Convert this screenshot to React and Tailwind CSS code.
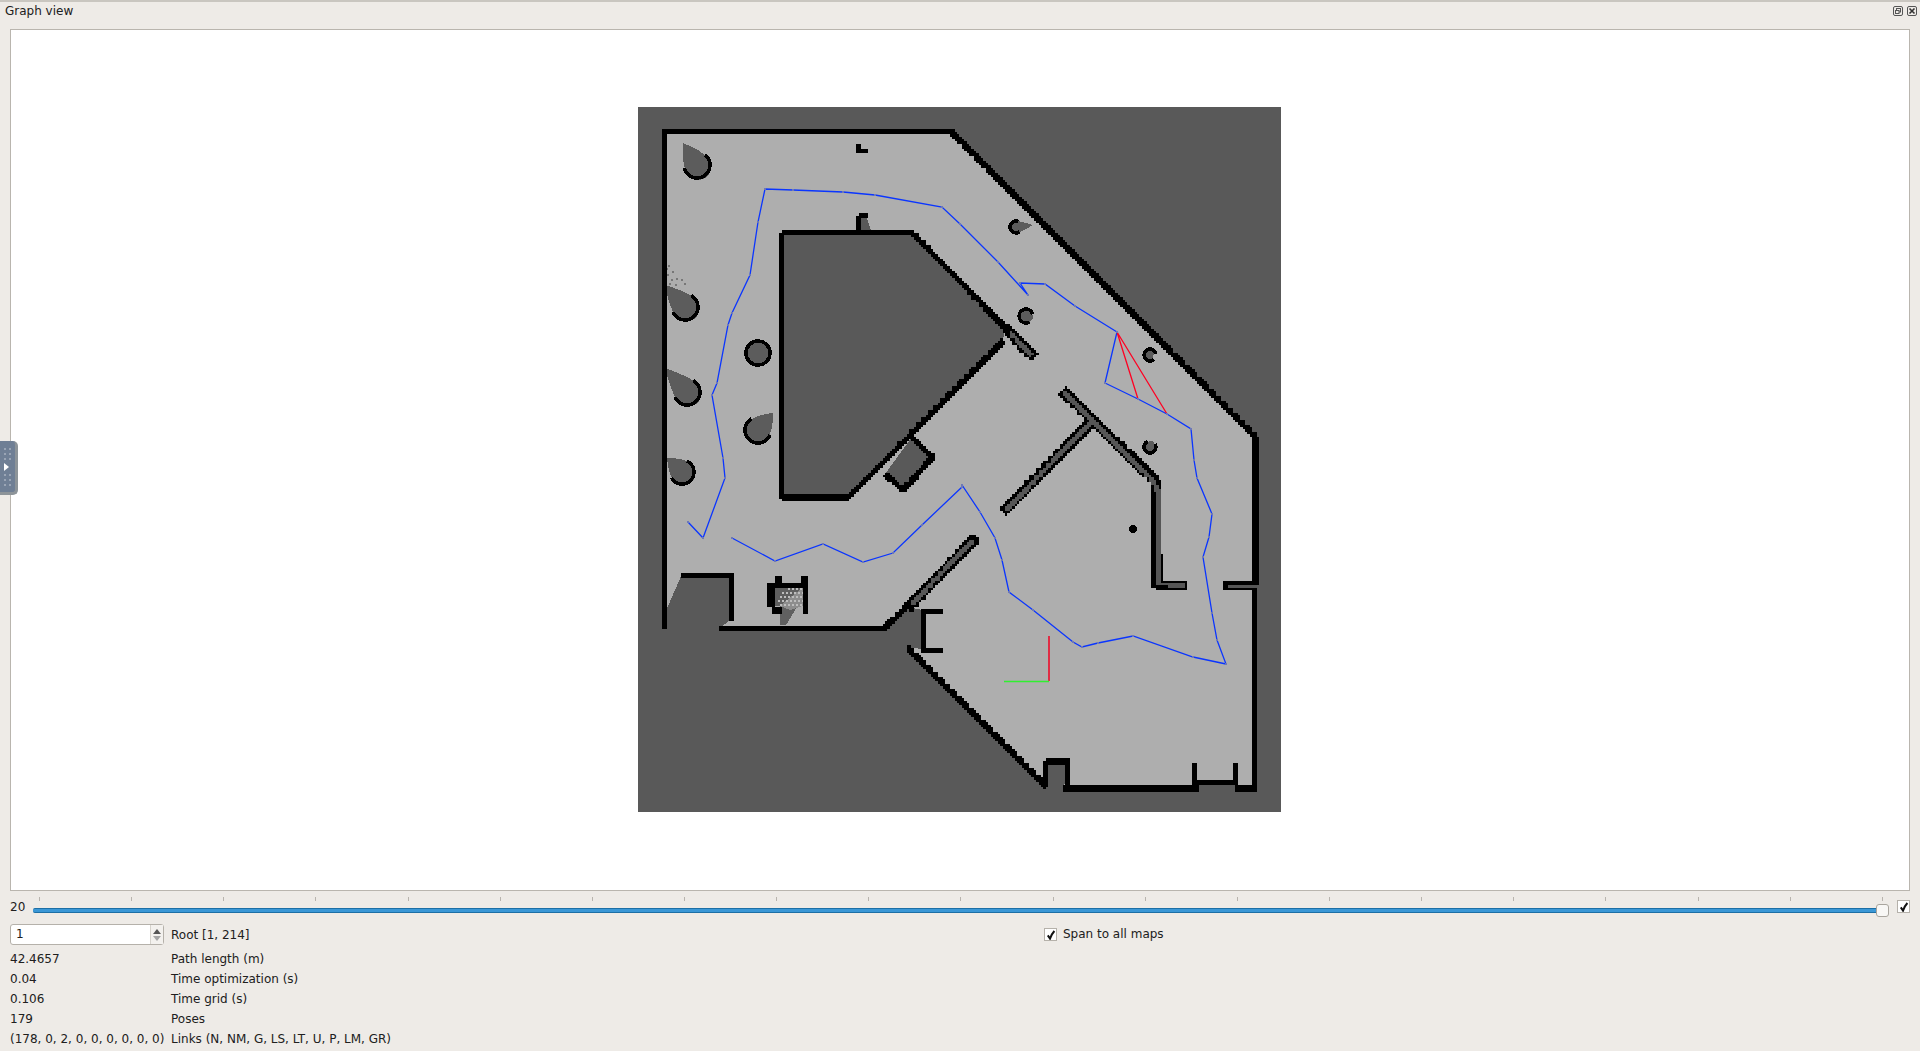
const CELL = 2.4;

// occupancy grid look: walls are stamped as square cells on a coarse grid
const cellsPath = (segments) => {
  const seen = new Set();
  segments.forEach(([pts, w]) => {
    for (let i = 0; i < pts.length - 1; i++) {
      const [x1, y1] = pts[i];
      const [x2, y2] = pts[i + 1];
      const len = Math.hypot(x2 - x1, y2 - y1);
      const nx = -(y2 - y1) / len;
      const ny = (x2 - x1) / len;
      for (let d = 0; d <= len; d += 1) {
        for (let o = -w / 2; o <= w / 2; o += 1) {
          const x = x1 + ((x2 - x1) * d) / len + nx * o;
          const y = y1 + ((y2 - y1) * d) / len + ny * o;
          seen.add(`${Math.round(x / CELL)},${Math.round(y / CELL)}`);
        }
      }
    }
  });
  return [...seen]
    .map((k) => {
      const [a, b] = k.split(",").map(Number);
      return `M${(a * CELL - CELL / 2 + 0.5).toFixed(1)} ${(b * CELL - CELL / 2 + 1).toFixed(1)}h${CELL}v${CELL}h-${CELL}z`;
    })
    .join("");
};

const blackWalls = [
  [[[663, 131], [951, 131], [1255, 436], [1255, 583]], 3],
  [[[1254, 583], [1254, 787], [1236, 787]], 4],
  [[[663, 131], [663, 626]], 3],
  [[[720, 628], [883, 628], [970, 543]], 3],
  [[[1197, 787], [1062, 787]], 3],
  [[[1045, 785], [907, 647]], 3],
  [[[782, 232], [912, 232], [1005, 327]], 3],
  [[[782, 232], [782, 497], [847, 497], [1003, 340]], 3],
  [[[1005, 327], [1033, 356]], 8],
  [[[1062, 390], [1155, 480], [1157, 585], [1185, 585]], 8],
  [[[1092, 420], [1003, 510]], 8],
  [[[1225, 585], [1256, 585]], 7],
  [[[975, 537], [907, 607]], 8],
  [[[682, 574], [730, 574], [730, 618]], 3],
  [[[1193, 763], [1193, 781], [1235, 781], [1235, 763]], 2],
  [[[940, 610], [922, 610], [922, 649], [940, 649]], 2],
  [[[1045, 785], [1046, 761], [1067, 761], [1067, 783]], 3],
  [[[912, 437], [932, 456], [903, 489], [885, 474]], 3],
  [[[857, 143], [857, 150], [866, 150]], 2],
  [[[858, 215], [858, 227]], 3],
  [[[858, 215], [866, 215]], 1],
  [[[768, 584], [807, 584]], 3],
  [[[774, 579], [781, 579]], 4],
  [[[802, 579], [806, 579]], 4],
  [[[770, 584], [770, 605]], 4],
  [[[805, 584], [805, 605]], 3],
  [[[773, 609], [781, 609]], 4],
  [[[804, 610], [806, 610]], 6],
];

const darkWalls = [
  [[[1010, 332], [1031, 354]], 2],
  [[[1064, 392], [1153, 480], [1157, 490], [1157, 583], [1183, 584]], 2],
  [[[1090, 422], [1006, 508]], 2],
  [[[1228, 585], [1254, 585]], 1],
  [[[972, 540], [912, 602]], 2],
];

// [tipX, tipY, centerX, centerY, r, arc half angle]
const drops = [
  [683, 143, 697, 165, 13, 1.9],
  [665, 285, 685, 307, 13, 1.9],
  [665, 368, 687, 392, 13, 1.9],
  [758, 353, 758, 353, 12, 3.2],
  [773, 413, 758, 430, 13, 1.9],
  [667, 458, 682, 472, 12, 1.9],
  [1033, 225, 1016, 227, 6, 2.1],
  [1033, 319, 1026, 316, 7, 2.5],
  [1153, 356, 1150, 355, 6, 2.6],
  [1152, 441, 1150, 447, 6, 2.4],
];

const onCircle = (cx, cy, r, a) => `${(cx + Math.cos(a) * r).toFixed(1)} ${(cy + Math.sin(a) * r).toFixed(1)}`;

// teardrop: convex sides running from the tip onto the circle
const dropPath = ([tx, ty, cx, cy, r]) => {
  if (tx === cx && ty === cy) return `M${cx - r} ${cy}a${r} ${r} 0 1 0 ${2 * r} 0a${r} ${r} 0 1 0 ${-2 * r} 0z`;
  const a = Math.atan2(cy - ty, cx - tx);
  const back = 0.9;
  const c1 = onCircle(cx - Math.cos(a) * r * 0.7, cy - Math.sin(a) * r * 0.7, r * 0.95, a - Math.PI / 2);
  const c2 = onCircle(cx - Math.cos(a) * r * 0.7, cy - Math.sin(a) * r * 0.7, r * 0.95, a + Math.PI / 2);
  return `M${tx} ${ty}Q${c1} ${onCircle(cx, cy, r, a - back - 0.6)}A${r} ${r} 0 1 1 ${onCircle(cx, cy, r, a + back + 0.6)}Q${c2} ${tx} ${ty}Z`;
};

const arcPath = ([tx, ty, cx, cy, r, h]) => {
  if (tx === cx && ty === cy) return `M${cx - r} ${cy}a${r} ${r} 0 1 0 ${2 * r} 0a${r} ${r} 0 1 0 ${-2 * r} 0z`;
  const a = Math.atan2(cy - ty, cx - tx);
  return `M${onCircle(cx, cy, r, a - h)}A${r} ${r} 0 ${h > Math.PI / 2 ? 1 : 0} 1 ${onCircle(cx, cy, r, a + h)}`;
};

const scatter = [
  [668, 265], [672, 271], [667, 274], [676, 278], [671, 279], [681, 279], [684, 283], [669, 283], [675, 284], [666, 268],
];
const dither = [];
for (let y = 588; y < 608; y += 4) {
  for (let x = 778; x < 803; x += 4) {
    if (x + y * 0.6 > 1135) dither.push([x + (y % 8 ? 2 : 0), y]);
  }
}

const pathA = "688,522 703,538 725,478 723,458 712,395 717,383 728,325 732,313 750,275 758,222 765,189 793,190 843,192 875,195 942,207 960,224 998,262 1028,295 1020,283 1045,284 1075,306 1117,332 1105,383 1138,399 1167,414 1191,429 1194,460 1197,478 1212,514 1209,537 1203,557 1212,613 1217,640 1226,664 1193,657 1133,636 1098,643 1082,647 1073,642 1033,610 1009,592 1002,560 995,538 980,512 962,485";
const pathB = "962,487 922,525 893,553 863,562 823,544 775,561 732,538";
const poses = `${pathA} ${pathB}`.split(" ").map((p) => p.split(",").map(Number));

const OccupancyMap = () => (
  <svg width="643" height="705" viewBox="638 107 643 705" className="block shrink-0">
    <rect x="638" y="107" width="643" height="705" fill="#595959" />
    <polygon
      shapeRendering="crispEdges"
      fill="#aeaeae"
      points="665,133 951,133 1255,437 1255,785 1235,785 1235,781 1197,781 1197,785 1062,785 1068,783 1068,762 1045,762 1045,785 907,647 922,649 922,610 907,607 883,628 720,628 730,620 730,574 682,574 665,613"
    />
    <g shapeRendering="crispEdges">
      <polygon fill="#595959" points="782,232 912,232 1005,327 1003,340 847,497 782,497" />
      <polygon fill="#595959" points="912,437 932,456 903,489 885,474" />
      <polygon fill="#595959" points="860,218 866,216 871,230 861,230" />
      <rect x="773" y="587" width="30" height="19" fill="#5f5f5f" />
      <polygon fill="#606060" points="780,605 797,607 786,625 780,625" />
      <polygon fill="#8d8d8d" points="803,587 803,606 790,610 780,606" />
      {dither.map(([x, y], i) => (
        <rect key={i} x={x} y={y} width="2" height="2" fill="#bdbdbd" />
      ))}
      {scatter.map(([x, y], i) => (
        <rect key={i} x={x} y={y} width="2" height="2" fill="#777777" />
      ))}
      {drops.map((d, i) => (
        <path key={i} d={dropPath(d)} fill="#5c5c5c" />
      ))}
      {drops.map((d, i) => (
        <path key={i} d={arcPath(d)} fill="none" stroke="#000000" strokeWidth="3.5" />
      ))}
      <circle cx="1133" cy="529" r="4" fill="#000000" />
      <path d={cellsPath(blackWalls)} fill="#000000" />
      <path d={cellsPath(darkWalls)} fill="#565656" />
    </g>
    <g fill="none" strokeWidth="1.3">
      <polyline points={pathA} stroke="#0a35ff" />
      <polyline points={pathB} stroke="#0a35ff" />
      <path d="M1117 332L1138 399M1117 332L1167 414" stroke="#ff0022" />
      <path d="M1049 636V681" stroke="#f00020" strokeWidth="1.5" />
      <path d="M1004 681.5H1049" stroke="#30f030" />
    </g>
    <g shapeRendering="crispEdges">
      {poses.map(([x, y], i) => (
        <rect key={i} x={x - 1} y={y - 1} width="2" height="2" fill="#6d78b8" />
      ))}
    </g>
  </svg>
);

const Check = () => (
  <svg width="10" height="10" viewBox="0 0 10 10">
    <path d="M1.8 5.4L4 8.6C5 5.8 6.2 3.4 8.4 1" fill="none" stroke="#111111" strokeWidth="2" />
  </svg>
);

const CheckBox = () => (
  <div className="w-[13px] h-[13px] flex items-center justify-center bg-white border border-[#b5b1aa] shrink-0">
    <Check />
  </div>
);

const stats = [
  ["42.4657", "Path length (m)"],
  ["0.04", "Time optimization (s)"],
  ["0.106", "Time grid (s)"],
  ["179", "Poses"],
  ["(178, 0, 2, 0, 0, 0, 0, 0, 0)", "Links (N, NM, G, LS, LT, U, P, LM, GR)"],
];

const ticks = Array.from({ length: 21 });

export default function App() {
  return (
    <div className="relative h-[1051px] w-[1920px] overflow-hidden flex flex-col bg-[#eeebe7] border-t-2 border-[#c9c6c0] text-[#202020] text-[12px] leading-[20px] font-['DejaVu_Sans',sans-serif]">
      {/* title bar */}
      <div className="h-[27px] shrink-0 flex items-start justify-between pl-[5px] pr-[3px]">
        <span className="leading-[18px]">Graph view</span>
        <div className="flex gap-[4px] pt-[4px]">
          <svg width="10" height="10" viewBox="0 0 10 10" fill="none" stroke="#555555">
            <rect x="0.5" y="0.5" width="9" height="9" rx="1.5" />
            <rect x="3.5" y="2.5" width="4" height="3.5" />
            <rect x="2.5" y="4.5" width="3.5" height="3" fill="#eeebe7" />
          </svg>
          <svg width="10" height="10" viewBox="0 0 10 10" fill="none" stroke="#555555">
            <rect x="0.5" y="0.5" width="9" height="9" rx="1.5" />
            <path d="M2.5 2.5L7.5 7.5M7.5 2.5L2.5 7.5" stroke="#333333" strokeWidth="1.6" />
          </svg>
        </div>
      </div>

      {/* graph view */}
      <div className="h-[862px] shrink-0 mx-[10px] bg-white border border-[#b9b5ae] flex items-center justify-center pr-[2px] pb-[2px]">
        <OccupancyMap />
      </div>

      {/* slider row */}
      <div className="h-[32px] shrink-0 flex items-center pl-[10px] pr-[10px]">
        <span className="w-[23px] shrink-0">20</span>
        <div className="relative flex-1 h-[26px] mr-[8px] -mt-[3px]">
          <div className="absolute left-[6px] right-[6px] top-[4px] flex justify-between">
            {ticks.map((_, i) => (
              <div key={i} className="w-px h-[4px] bg-[#b8b4ae]" />
            ))}
          </div>
          <div className="absolute left-0 right-[4px] top-[15px] h-[5px] rounded-[2px] bg-[#3a97d6] border-y border-[#1d6fa5]" />
          <div className="absolute right-0 top-[11px] w-[13px] h-[13px] rounded-[3px] bg-[#f8f7f5] border border-[#a9a59e]" />
        </div>
        <div className="-mt-[1px]">
          <CheckBox />
        </div>
      </div>

      {/* root and stats */}
      <div className="grid grid-cols-[161px_873px_1fr] pl-[10px] pt-[1px] items-center">
        <div className="w-[154px] h-[21px] flex items-stretch bg-white border border-[#b5b1aa] rounded-[3px]">
          <span className="flex-1 pl-[5px] leading-[19px]">1</span>
          <div className="w-[13px] flex flex-col items-center justify-center gap-[2px] border-l border-[#d6d3cd] bg-[#f3f1ee]">
            <div className="w-0 h-0 border-x-[4px] border-x-transparent border-b-[5px] border-b-[#555555]" />
            <div className="w-0 h-0 border-x-[4px] border-x-transparent border-t-[5px] border-t-[#a5a5a5]" />
          </div>
        </div>
        <span>Root [1, 214]</span>
        <div className="flex items-center gap-[6px]">
          <CheckBox />
          <span className="-translate-y-px">Span to all maps</span>
        </div>
      </div>
      <div className="grid grid-cols-[161px_1fr] pl-[10px] pt-[4px]">
        {stats.map(([value, label]) => (
          <div key={label} className="contents">
            <span className="whitespace-nowrap">{value}</span>
            <span>{label}</span>
          </div>
        ))}
      </div>

      {/* collapsed side panel handle */}
      <div className="absolute left-0 top-[439px] w-[18px] h-[54px] rounded-r-[5px] bg-[#6f7f95] border-r-[3px] border-b-[3px] border-[#8d9499] flex flex-col items-center justify-center gap-[3px]">
        {[0, 1, 2].map((i) => (
          <div key={i} className="flex gap-[3px]">
            <div className="w-[2px] h-[2px] bg-[#9aa5b5]" />
            <div className="w-[2px] h-[2px] bg-[#9aa5b5]" />
          </div>
        ))}
        <div className="w-0 h-0 -ml-[2px] border-y-[4px] border-y-transparent border-l-[5px] border-l-white" />
        {[0, 1, 2].map((i) => (
          <div key={i} className="flex gap-[3px]">
            <div className="w-[2px] h-[2px] bg-[#9aa5b5]" />
            <div className="w-[2px] h-[2px] bg-[#9aa5b5]" />
          </div>
        ))}
      </div>
    </div>
  );
}
